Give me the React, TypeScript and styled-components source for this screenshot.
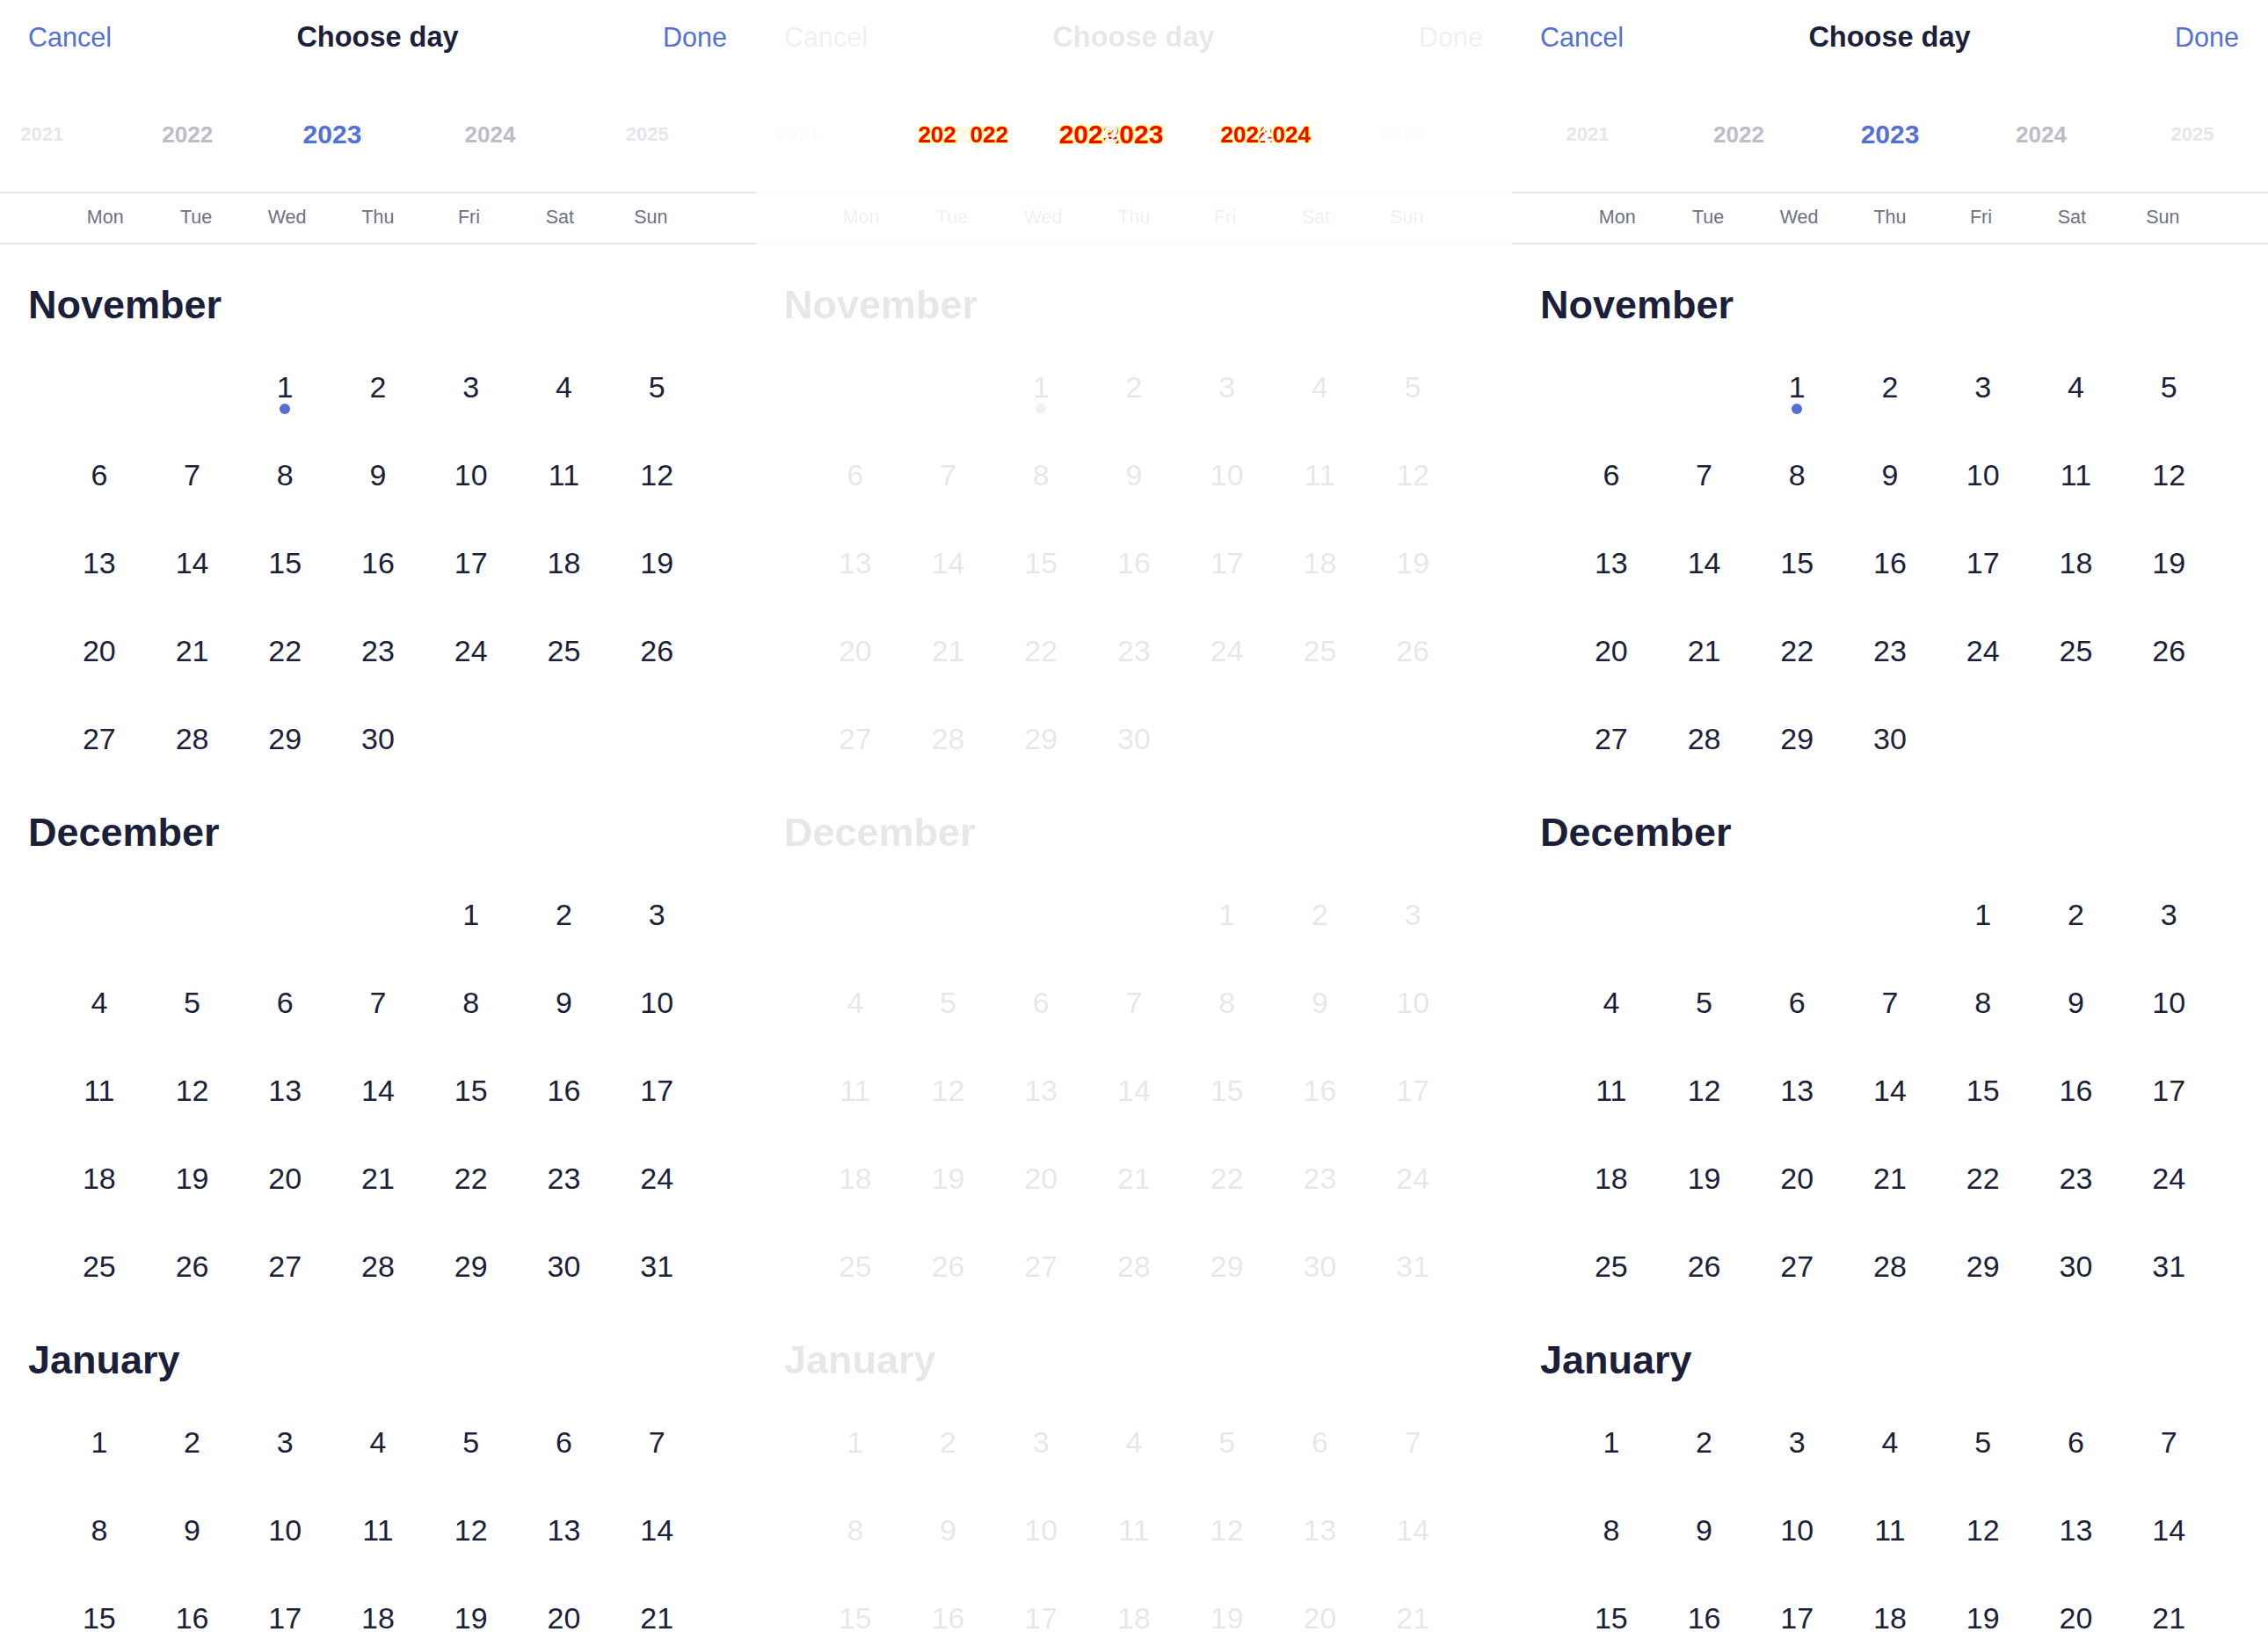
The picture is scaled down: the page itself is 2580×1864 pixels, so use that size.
import React from 'react';
import styled, { createGlobalStyle } from 'styled-components';

const FONT = '"Liberation Sans", Arial, sans-serif';

const palette = {
  blue: '#5370d6',
  navy: '#1c1f3a',
  weekday: '#6e7083',
  line: '#e5e5e9',
  yearNear: '#bdbdc8',
  yearFar: '#e6e6eb',
  diffRed: '#ff0000',
  diffYellow: '#ffff00',
};

const GlobalStyle = createGlobalStyle`
  html, body { margin: 0; padding: 0; background: #ffffff; }
  body { font-family: ${FONT}; -webkit-font-smoothing: antialiased; }
  * { box-sizing: border-box; }
`;

const Page = styled.main`
  display: flex;
  width: 2580px;
  height: 1864px;
  overflow: hidden;
  background: #ffffff;
`;

const PanelFrame = styled.section`
  position: relative;
  flex: none;
  width: 860px;
  height: 1864px;
  overflow: hidden;
  background: #ffffff;
`;

const Sheet = styled.div<{ $faded?: boolean }>`
  display: flex;
  flex-direction: column;
  height: 100%;
  ${(p) => (p.$faded ? 'filter: grayscale(1); opacity: 0.1;' : '')}
`;

const Header = styled.header`
  display: grid;
  grid-template-columns: 1fr auto 1fr;
  align-items: center;
  height: 84px;
  padding: 0 33px 0 32px;
  flex: none;
`;

const HeaderButton = styled.button<{ $end?: boolean }>`
  justify-self: ${(p) => (p.$end ? 'end' : 'start')};
  padding: 0;
  border: 0;
  background: none;
  font-family: ${FONT};
  font-size: 30.5px;
  font-weight: 400;
  line-height: 1;
  color: ${palette.blue};
`;

const Title = styled.h1`
  margin: 0;
  font-family: ${FONT};
  font-size: 32.5px;
  font-weight: 700;
  line-height: 1;
  color: ${palette.navy};
`;

const YearStrip = styled.div<{ $cols: string }>`
  display: grid;
  grid-template-columns: ${(p) => p.$cols};
  align-items: center;
  height: 136px;
  padding-top: 4px;
  border-bottom: 2px solid ${palette.line};
  flex: none;
`;

const yearTier = {
  far: { size: 22, color: palette.yearFar },
  near: { size: 26, color: palette.yearNear },
  current: { size: 30, color: palette.blue },
};

type Tier = keyof typeof yearTier;

const Year = styled.span<{ $tier: Tier }>`
  justify-self: center;
  font-family: ${FONT};
  font-weight: 700;
  font-size: ${(p) => yearTier[p.$tier].size}px;
  line-height: 1;
  color: ${(p) => yearTier[p.$tier].color};
  white-space: nowrap;
`;

const WeekdayRow = styled.div`
  display: grid;
  grid-template-columns: repeat(7, 1fr);
  align-items: center;
  height: 58px;
  padding: 0 68px;
  border-bottom: 2px solid ${palette.line};
  flex: none;
`;

const Weekday = styled.span`
  justify-self: center;
  font-family: ${FONT};
  font-size: 21.5px;
  line-height: 1;
  color: ${palette.weekday};
`;

const MonthList = styled.div`
  flex: 1;
  padding-top: 12px;
  overflow: hidden;
`;

const MonthSection = styled.section`
  display: flex;
  flex-direction: column;
`;

const MonthTitle = styled.h2`
  margin: 0;
  padding: 32px 32px 18px;
  font-family: ${FONT};
  font-size: 45px;
  font-weight: 700;
  line-height: 50px;
  color: ${palette.navy};
`;

const DayGrid = styled.div`
  display: grid;
  grid-template-columns: repeat(7, 1fr);
  grid-auto-rows: 100px;
  padding: 0 60px;
`;

const DayCell = styled.div<{ $start?: number }>`
  position: relative;
  display: flex;
  align-items: center;
  justify-content: center;
  ${(p) => (p.$start ? `grid-column-start: ${p.$start};` : '')}
  font-family: ${FONT};
  font-size: 34px;
  line-height: 100px;
  color: ${palette.navy};
`;

const TodayDot = styled.span`
  position: absolute;
  top: 69px;
  left: 50%;
  width: 12px;
  height: 12px;
  margin-left: -6px;
  border-radius: 50%;
  background: ${palette.blue};
`;

const DiffLayer = styled.svg`
  position: absolute;
  top: 84px;
  left: 0;
  overflow: visible;
`;

const YEARS: { label: string; tier: Tier }[] = [
  { label: '2021', tier: 'far' },
  { label: '2022', tier: 'near' },
  { label: '2023', tier: 'current' },
  { label: '2024', tier: 'near' },
  { label: '2025', tier: 'far' },
];

// centre of every year in each of the two scroll states
const CENTERS_A = [47.8, 213.3, 378, 557.5, 736.2];
const CENTERS_B = [86, 258, 430, 602, 774];

const colsFromCenters = (centers: number[]) => {
  let edge = 0;
  const widths: string[] = [];
  centers.forEach((c) => {
    const w = 2 * (c - edge);
    widths.push(`${w.toFixed(1)}px`);
    edge += w;
  });
  return widths.join(' ');
};

const WEEKDAYS = ['Mon', 'Tue', 'Wed', 'Thu', 'Fri', 'Sat', 'Sun'];

const MONTHS = [
  { name: 'November', start: 3, days: 30, today: 1 },
  { name: 'December', start: 5, days: 31 },
  { name: 'January', start: 1, days: 31 },
];

type Variant = 'a' | 'b';

function CalendarSheet({ variant, faded }: { variant: Variant; faded?: boolean }) {
  const centers = variant === 'a' ? CENTERS_A : CENTERS_B;
  return (
    <Sheet $faded={faded}>
      <Header>
        <HeaderButton>Cancel</HeaderButton>
        <Title>Choose day</Title>
        <HeaderButton $end>Done</HeaderButton>
      </Header>
      <YearStrip $cols={colsFromCenters(centers)}>
        {YEARS.map((y) => (
          <Year key={y.label} $tier={y.tier}>
            {y.label}
          </Year>
        ))}
      </YearStrip>
      <WeekdayRow>
        {WEEKDAYS.map((d) => (
          <Weekday key={d}>{d}</Weekday>
        ))}
      </WeekdayRow>
      <MonthList>
        {MONTHS.map((m) => (
          <MonthSection key={m.name}>
            <MonthTitle>{m.name}</MonthTitle>
            <DayGrid>
              {Array.from({ length: m.days }, (_, i) => i + 1).map((d) => (
                <DayCell key={d} $start={d === 1 ? m.start : undefined}>
                  {d}
                  {m.today === d && <TodayDot />}
                </DayCell>
              ))}
            </DayGrid>
          </MonthSection>
        ))}
      </MonthList>
    </Sheet>
  );
}

// pixel-diff overlay: glyphs that differ between the two scroll states
function YearDiff() {
  const items = YEARS.map((y, i) => ({ ...y, a: CENTERS_A[i], b: CENTERS_B[i] })).filter(
    (y) => y.tier !== 'far'
  );
  const rowCenter = 69; // centre of the strip content, relative to the layer top
  const textProps = (size: number) => ({
    fontFamily: FONT,
    fontWeight: 700,
    fontSize: size,
    textAnchor: 'middle' as const,
  });
  return (
    <DiffLayer width={860} height={134} viewBox="0 0 860 134">
      <defs>
        {items.map((y) => {
          const size = yearTier[y.tier].size;
          const base = rowCenter + 0.3465 * size;
          return (
            <React.Fragment key={y.label}>
              <mask id={`diff-a-${y.label}`} maskUnits="userSpaceOnUse" x={0} y={0} width={860} height={134}>
                <rect x={0} y={0} width={860} height={134} fill="#fff" />
                <text {...textProps(size)} x={y.b} y={base} fill="#000" stroke="#000" strokeWidth={3}>
                  {y.label}
                </text>
              </mask>
              <mask id={`diff-b-${y.label}`} maskUnits="userSpaceOnUse" x={0} y={0} width={860} height={134}>
                <rect x={0} y={0} width={860} height={134} fill="#fff" />
                <text {...textProps(size)} x={y.a} y={base} fill="#000" stroke="#000" strokeWidth={3}>
                  {y.label}
                </text>
              </mask>
            </React.Fragment>
          );
        })}
      </defs>
      {items.map((y) => {
        const size = yearTier[y.tier].size;
        const base = rowCenter + 0.3465 * size;
        return (
          <React.Fragment key={y.label}>
            <text
              {...textProps(size)}
              x={y.a}
              y={base}
              fill={palette.diffRed}
              stroke={palette.diffYellow}
              strokeWidth={1.6}
              paintOrder="stroke"
              mask={`url(#diff-a-${y.label})`}
            >
              {y.label}
            </text>
            <text
              {...textProps(size)}
              x={y.b}
              y={base}
              fill={palette.diffRed}
              stroke={palette.diffYellow}
              strokeWidth={1.6}
              paintOrder="stroke"
              mask={`url(#diff-b-${y.label})`}
            >
              {y.label}
            </text>
          </React.Fragment>
        );
      })}
    </DiffLayer>
  );
}

export default function App() {
  return (
    <>
      <GlobalStyle />
      <Page>
        <PanelFrame>
          <CalendarSheet variant="a" />
        </PanelFrame>
        <PanelFrame>
          <CalendarSheet variant="a" faded />
          <YearDiff />
        </PanelFrame>
        <PanelFrame>
          <CalendarSheet variant="b" />
        </PanelFrame>
      </Page>
    </>
  );
}
